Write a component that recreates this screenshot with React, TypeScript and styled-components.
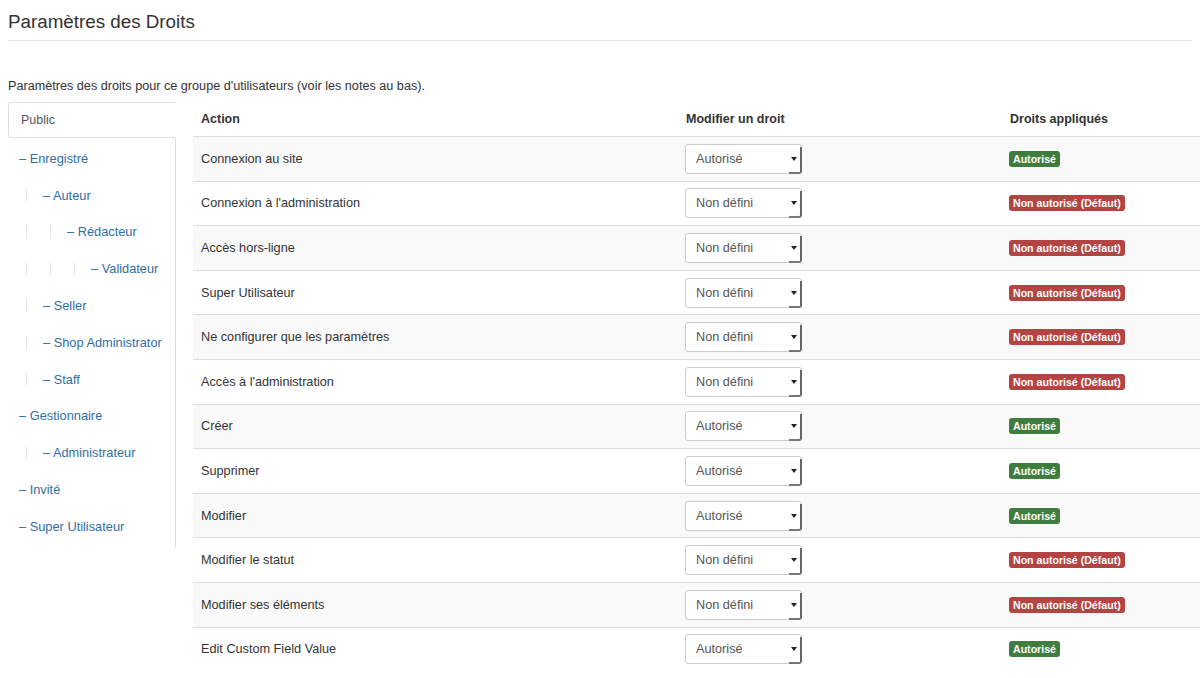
import styled, { createGlobalStyle } from "styled-components";

interface GroupItem {
  name: string;
  level: number;
}

interface RuleRow {
  action: string;
  setting: string;
  allowed: boolean;
}

const groups: GroupItem[] = [
  { name: "Enregistré", level: 1 },
  { name: "Auteur", level: 2 },
  { name: "Rédacteur", level: 3 },
  { name: "Validateur", level: 4 },
  { name: "Seller", level: 2 },
  { name: "Shop Administrator", level: 2 },
  { name: "Staff", level: 2 },
  { name: "Gestionnaire", level: 1 },
  { name: "Administrateur", level: 2 },
  { name: "Invité", level: 1 },
  { name: "Super Utilisateur", level: 1 },
];

const rules: RuleRow[] = [
  { action: "Connexion au site", setting: "Autorisé", allowed: true },
  { action: "Connexion à l'administration", setting: "Non défini", allowed: false },
  { action: "Accès hors-ligne", setting: "Non défini", allowed: false },
  { action: "Super Utilisateur", setting: "Non défini", allowed: false },
  { action: "Ne configurer que les paramètres", setting: "Non défini", allowed: false },
  { action: "Accès à l'administration", setting: "Non défini", allowed: false },
  { action: "Créer", setting: "Autorisé", allowed: true },
  { action: "Supprimer", setting: "Autorisé", allowed: true },
  { action: "Modifier", setting: "Autorisé", allowed: true },
  { action: "Modifier le statut", setting: "Non défini", allowed: false },
  { action: "Modifier ses éléments", setting: "Non défini", allowed: false },
  { action: "Edit Custom Field Value", setting: "Autorisé", allowed: true },
];

const App = () => {
  return (
    <>
      <GlobalStyle />
      <Page>
        <Title>Paramètres des Droits</Title>
        <Intro>
          Paramètres des droits pour ce groupe d'utilisateurs (voir les notes au bas).
        </Intro>
        <Body>
          <GroupNav>
            <ActiveTab>Public</ActiveTab>
            {groups.map((g) => (
              <GroupLink key={g.name}>
                {Array.from({ length: g.level - 1 }).map((_, i) => (
                  <Guide key={i} />
                ))}
                – {g.name}
              </GroupLink>
            ))}
          </GroupNav>
          <RulesTable>
            <thead>
              <tr>
                <Th $width={469}>Action</Th>
                <Th $width={308}>Modifier un droit</Th>
                <Th>Droits appliqués</Th>
              </tr>
            </thead>
            <tbody>
              {rules.map((r, i) => (
                <Row key={r.action} $striped={i % 2 === 0}>
                  <td>{r.action}</td>
                  <td>
                    <SelectWrap>
                      <Select defaultValue={r.setting}>
                        <option>Non défini</option>
                        <option>Autorisé</option>
                        <option>Refusé</option>
                      </Select>
                    </SelectWrap>
                  </td>
                  <td>
                    <Badge $allowed={r.allowed}>
                      {r.allowed ? "Autorisé" : "Non autorisé (Défaut)"}
                    </Badge>
                  </td>
                </Row>
              ))}
            </tbody>
          </RulesTable>
        </Body>
      </Page>
    </>
  );
};

export default App;

const GlobalStyle = createGlobalStyle`
  body {
    margin: 0;
    background: #fff;
    font-family: "Liberation Sans", Arial, sans-serif;
    color: #333;
    overflow: hidden;
  }
`;

const Page = styled.div`
  padding-left: 8px;
  width: 1192px;
`;

const Title = styled.h2`
  margin: 0 8px 0 0;
  padding: 10px 0 6px;
  font-size: 18.8px;
  line-height: 24px;
  font-weight: normal;
  color: #333;
  border-bottom: 1px solid #e5e5e5;
`;

const Intro = styled.p`
  margin: 36px 0 7px;
  font-size: 12.65px;
  line-height: 18px;
`;

const Body = styled.div`
  display: flex;
  align-items: flex-start;
`;

const GroupNav = styled.div`
  width: 167px;
  flex-shrink: 0;
  display: flex;
  flex-direction: column;
  padding-bottom: 3px;
  border-right: 1px solid #ddd;
`;

const ActiveTab = styled.div`
  height: 34px;
  line-height: 34px;
  padding-left: 12px;
  margin-right: -1px;
  margin-bottom: 2px;
  border: 1px solid #ddd;
  border-right-color: #fff;
  border-radius: 4px 0 0 4px;
  background: #fff;
  font-size: 12.5px;
  color: #555;
`;

const GroupLink = styled.div`
  display: flex;
  align-items: center;
  height: 36.8px;
  padding-left: 11px;
  font-size: 12.8px;
  color: #2f6ea5;
  white-space: nowrap;
`;

const Guide = styled.span`
  display: inline-block;
  width: 16px;
  height: 13px;
  margin-left: 7px;
  border-left: 1px dotted #ccc;
`;

const RulesTable = styled.table`
  flex: 1;
  margin-left: 17px;
  border-collapse: collapse;
  font-size: 12.7px;
  color: #333;

  td {
    padding: 0 8px;
    height: 43.6px;
    border-top: 1px solid #ddd;
    vertical-align: middle;
  }
`;

const Th = styled.th<{ $width?: number }>`
  width: ${(p) => (p.$width ? `${p.$width}px` : "auto")};
  height: 34px;
  padding: 0 8px;
  text-align: left;
  font-weight: bold;
  font-size: 12.5px;
  vertical-align: middle;
`;

const Row = styled.tr<{ $striped: boolean }>`
  background: ${(p) => (p.$striped ? "#f9f9f9" : "#fff")};
`;

const SelectWrap = styled.div`
  position: relative;
  width: 117px;
  height: 30px;
  margin-left: -1px;

  &::after {
    content: "";
    position: absolute;
    right: 0;
    top: 3px;
    bottom: 0;
    width: 11px;
    border-right: 2px solid #666;
    border-bottom: 2px solid #777;
    border-bottom-right-radius: 3px;
    pointer-events: none;
  }

  &::before {
    content: "";
    position: absolute;
    right: 5px;
    top: 13px;
    border-left: 3px solid transparent;
    border-right: 3px solid transparent;
    border-top: 4px solid #222;
    pointer-events: none;
  }
`;

const Select = styled.select`
  appearance: none;
  width: 100%;
  height: 100%;
  padding: 0 10px;
  border: 1px solid #ccc;
  border-radius: 3px;
  background: #fff;
  font-family: "Liberation Sans", Arial, sans-serif;
  font-size: 12.7px;
  color: #555;
`;

const Badge = styled.span<{ $allowed: boolean }>`
  display: inline-block;
  margin-left: -1px;
  padding: 2px 4px;
  border-radius: 3px;
  font-size: 10.6px;
  font-weight: bold;
  line-height: 12px;
  color: #fff;
  background: ${(p) => (p.$allowed ? "#3e7d3e" : "#b44442")};
`;
